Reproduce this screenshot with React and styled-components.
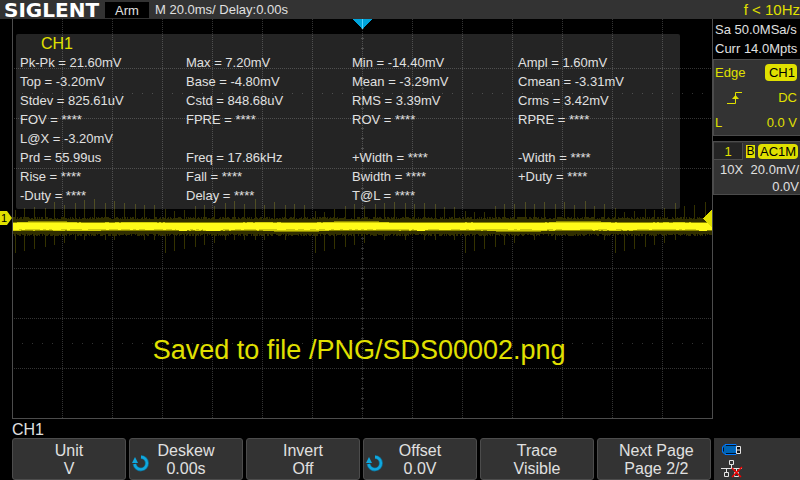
import React from "react";
import styled, { createGlobalStyle, css } from "styled-components";

const YELLOW = "#e0e000";
const BAR = "#333333";
const EDGE = "#4c4c4c";

const GlobalStyle = createGlobalStyle`
  * { box-sizing: border-box; }
  body {
    margin: 0;
    background: #000;
    color: #e0e0e0;
    font: 13px/19px "Liberation Sans", Arial, sans-serif;
  }
`;

const Screen = styled.div`
  display: flex;
  flex-direction: column;
  min-height: 100vh;
`;

const TopBar = styled.header`
  display: flex;
  align-items: center;
  height: 19px;
  padding-left: 4px;
  background: ${BAR};
  white-space: nowrap;
`;

const Logo = styled.span`
  align-self: flex-start;
  width: 101px;
  color: #fff;
  font-family: "DejaVu Sans", Verdana, sans-serif;
  font-size: 20px;
  font-weight: 700;
  line-height: 21px;
`;

const RunState = styled.span`
  width: 44px;
  height: 16px;
  margin-right: 6px;
  background: #000;
  line-height: 17px;
  text-align: center;
`;

const Frequency = styled.span`
  margin-left: auto;
  color: ${YELLOW};
  font-size: 15px;
`;

const Main = styled.main`
  display: grid;
  grid-template-columns: 12px minmax(0, 1fr) 87px;
  flex: 1;
`;

const Gutter = styled.div`
  position: relative;
`;

const ChannelMarker = styled.svg`
  position: absolute;
  left: 0;
  top: 48%;
  width: 12px;
  height: 14px;
`;

const Plot = styled.section`
  position: relative;
  border: 1px solid ${EDGE};
  border-top: 0;
`;

const PlotCanvas = styled.svg`
  position: absolute;
  inset: 0;
  width: 100%;
  height: 100%;
`;

const Measurements = styled.div`
  position: relative;
  width: 95%;
  margin: 15px 0 0 3px;
  padding-bottom: 4px;
  border-radius: 2px;
  background: rgba(255, 255, 255, 0.14);
`;

const MeasureTitle = styled.h2`
  margin: 0;
  padding-left: 25px;
  color: ${YELLOW};
  font-size: 16px;
  font-weight: 400;
  line-height: 19px;
`;

const MeasureGrid = styled.div`
  display: grid;
  grid-template-columns: repeat(4, 1fr);
  grid-auto-rows: 19px;
  white-space: nowrap;
`;

const Measure = styled.span`
  padding-left: 4px;
`;

const Toast = styled.div`
  position: absolute;
  left: 20%;
  top: 79%;
  color: ${YELLOW};
  font-size: 27px;
  line-height: 32px;
  white-space: nowrap;
`;

const Side = styled.aside`
  display: flex;
  flex-direction: column;
  white-space: nowrap;
`;

const Acquisition = styled.div`
  padding: 1px 0 1px 2px;
`;

const SidePanel = styled.section`
  border: 1px solid ${EDGE};
  border-right: 0;
  background: ${BAR};
  ${(p) => p.$trigger && css`
    display: grid;
    grid-auto-rows: 25px;
    margin-bottom: 5px;
    color: ${YELLOW};
  `}
`;

const SideRow = styled.div`
  display: flex;
  align-items: center;
  justify-content: space-between;
  padding: 0 3px 0 1px;
`;

const Badge = styled.span`
  padding: 0 2px 0 4px;
  border-radius: 4px;
  background: ${YELLOW};
  color: #000;
  line-height: 17px;
`;

const ChannelHead = styled.div`
  display: flex;
  align-items: center;
  height: 18px;
  color: ${YELLOW};
`;

const ChannelTab = styled.span`
  width: 29px;
  height: 17px;
  margin-right: 3px;
  border: 1px solid ${EDGE};
  border-width: 0 1px 1px 0;
  background: #242424;
  line-height: 18px;
  text-align: center;
`;

const Bandwidth = styled.span`
  display: flex;
  align-items: center;
  justify-content: center;
  width: 9px;
  height: 13px;
  margin-right: 3px;
  background: ${YELLOW};
  color: #000;
  font-size: 12px;
  line-height: 13px;
`;

const Coupling = styled(Badge)`
  padding: 0 2px;
  line-height: 15px;
`;

const ChannelRow = styled.div`
  display: flex;
  justify-content: space-between;
  height: 17px;
  padding: 0 1px 0 6px;
`;

const Bottom = styled.footer`
  display: grid;
  grid-template-columns: minmax(0, 1fr) 86px;
  gap: 0 3px;
  padding-left: 12px;
`;

const MenuTitle = styled.div`
  grid-column: 1 / -1;
  height: 19px;
  font-size: 16px;
  line-height: 22px;
`;

const SoftKeys = styled.nav`
  display: grid;
  grid-template-columns: repeat(6, minmax(0, 1fr));
  gap: 3px;
`;

const SoftKey = styled.button`
  display: grid;
  grid-template-columns: 16px 1fr 16px;
  grid-template-rows: 18px 18px;
  height: 42px;
  padding: 3px 5px;
  border: 1px solid ${EDGE};
  border-radius: 3px;
  background: ${BAR};
  color: #e0e0e0;
  font: 16px/18px "Liberation Sans", Arial, sans-serif;
  white-space: nowrap;
`;

const KeyText = styled.span`
  grid-column: 2;
  grid-row: ${(p) => p.$row};
`;

const KnobIcon = styled.svg`
  grid-column: 1;
  grid-row: 1 / 3;
  align-self: end;
  width: 18px;
  height: 18px;
  margin: 0 0 6px -4px;
`;

const Status = styled.div`
  display: flex;
  flex-direction: column;
  gap: 4px;
  padding: 5px 7px 2px;
  background: ${BAR};
`;

const noise = (n) => {
  const v = Math.sin(n * 127.1 + 11.7) * 43758.5453;
  return v - Math.floor(v);
};

const columns = (step, fn) => {
  let d = "";
  for (let x = 0; x < 700; x += step) {
    const [top, bottom] = fn(x);
    d += `M${x} ${top}h${step}V${bottom}h-${step}z`;
  }
  return d;
};

const drift = (x) => Math.sin(x / 17) + Math.sin(x / 41);
const hazePath = columns(1, (x) => [
  200 - Math.floor(noise(x) * 3),
  215 + Math.floor(noise(x + 900) * 3),
]);
const midPath = columns(3, (x) => [
  drift(x) > 1 ? 202 : 203,
  drift(x + 60) > 1 ? 213 : 212,
]);
const warmPath = columns(2, (x) => [
  drift(x) + noise(x) > 0.8 ? 203 : 204,
  drift(x + 60) + noise(x + 9) > 0.8 ? 212 : 211,
]);
const glowPath = columns(3, (x) => [
  204,
  210 + (noise(x + 50) > 0.6 ? 1 : 0),
]);
const dips = [[170, 14], [200, 20], [408, 14], [690, 14]];
const dipPath = dips
  .map(([x, w]) => `M${x - w / 2} 209h${w}v2h-3v1h-${w - 6}v-1h-3z`)
  .join("");

let spikePath = "";
for (let i = 0; i < 70; i += 1) {
  const x = 1 + i * 10 + (i % 3 === 0 ? 1 : 0);
  const wave = Math.abs(Math.sin((i * Math.PI) / 15.5));
  const up = 195 - Math.round(wave * 9 + noise(i) * 6);
  spikePath += `M${x} ${up}h1V200h-1z`;
  if (i % 15 < 6) spikePath += `M${x} 214h1v${20 - (i % 15) * 2}h-1z`;
  else if (noise(i + 70) > 0.4) spikePath += `M${x} 214h1v7h-1z`;
}

const range = (n) => Array.from({ length: n }, (_, i) => i);

const Graticule = () => (
  <PlotCanvas viewBox="0 0 699 399" preserveAspectRatio="none" shapeRendering="crispEdges" aria-hidden="true">
    <g stroke="#343434" strokeWidth="1" fill="none">
      {range(13).map((i) => (
        <path key={i} d={`M${49.5 + i * 50} 0V399`} strokeDasharray="1 1" />
      ))}
      {[49.5, 99.5, 149.5, 249.5, 299.5, 349.5].map((y) => (
        <path key={y} d={`M1 ${y}H699`} strokeDasharray="1 1" />
      ))}
      <path d="M9 74.5H699M9 324.5H699" strokeDasharray="1 9" />
      {range(39).map((i) => (
        <path key={i} d={`M348 ${9.5 + i * 10}h3`} />
      ))}
    </g>
    <path d={spikePath} fill="#343200" />
    <path d={hazePath} fill="#302e00" />
    <path d={midPath} fill="#8a8600" />
    <path d={warmPath} fill="#d0cc0c" />
    <path d={glowPath} fill="#fffb18" />
    <path d={dipPath} fill="#fffb18" />
    <path d="M340 0h19l-9.5 10z" fill="#00a5dc" />
    <path d="M349 0h1v10h-1z" fill="#52d3ff" />
    <path d="M699 190v19l-9 -10z" fill={YELLOW} />
  </PlotCanvas>
);

const Knob = () => (
  <KnobIcon viewBox="0 0 18 18" aria-hidden="true">
    <path d="M10 3A6.2 6.2 0 1 1 3.6 10" fill="none" stroke="#0f6f94" strokeWidth="4" />
    <path d="M10 3A6.2 6.2 0 1 1 3.6 10" fill="none" stroke="#10a8df" strokeWidth="2.4" />
    <path d="M4 3L7 9H1z" fill="#10a8df" />
  </KnobIcon>
);

const cells = [
  "Pk-Pk = 21.60mV", "Max = 7.20mV", "Min = -14.40mV", "Ampl = 1.60mV",
  "Top = -3.20mV", "Base = -4.80mV", "Mean = -3.29mV", "Cmean = -3.31mV",
  "Stdev = 825.61uV", "Cstd = 848.68uV", "RMS = 3.39mV", "Crms = 3.42mV",
  "FOV = ****", "FPRE = ****", "ROV = ****", "RPRE = ****",
  "L@X = -3.20mV", "", "", "",
  "Prd = 55.99us", "Freq = 17.86kHz", "+Width = ****", "-Width = ****",
  "Rise = ****", "Fall = ****", "Bwidth = ****", "+Duty = ****",
  "-Duty = ****", "Delay = ****", "T@L = ****", "",
];

const keys = [
  { name: "Unit", value: "V" },
  { name: "Deskew", value: "0.00s", knob: true },
  { name: "Invert", value: "Off" },
  { name: "Offset", value: "0.0V", knob: true },
  { name: "Trace", value: "Visible" },
  { name: "Next Page", value: "Page 2/2" },
];

export default function App() {
  return (
    <Screen>
      <GlobalStyle />
      <TopBar>
        <Logo>SIGLENT</Logo>
        <RunState>Arm</RunState>
        <span>M 20.0ms/ Delay:0.00s</span>
        <Frequency>f &lt; 10Hz</Frequency>
      </TopBar>

      <Main>
        <Gutter>
          <ChannelMarker viewBox="0 0 12 14" aria-label="Channel 1 position">
            <path d="M0 0H7L12 7L7 14H0z" fill={YELLOW} />
            <text x="1" y="11" fontSize="11" fill="#000">1</text>
          </ChannelMarker>
        </Gutter>

        <Plot aria-label="Waveform">
          <Graticule />
          <Measurements>
            <MeasureTitle>CH1</MeasureTitle>
            <MeasureGrid>
              {cells.map((text, i) => <Measure key={i}>{text}</Measure>)}
            </MeasureGrid>
          </Measurements>
          <Toast role="status">Saved to file /PNG/SDS00002.png</Toast>
        </Plot>

        <Side>
          <Acquisition>
            <div>Sa 50.0MSa/s</div>
            <div>Curr 14.0Mpts</div>
          </Acquisition>
          <SidePanel $trigger aria-label="Trigger">
            <SideRow><span>Edge</span><Badge>CH1</Badge></SideRow>
            <SideRow>
              <svg width="30" height="14" viewBox="0 0 30 14" aria-label="Rising edge">
                <path d="M12 12.5H20.5V1.5H27" fill="none" stroke={YELLOW} />
                <path d="M20.5 4L24 8H17z" fill={YELLOW} />
              </svg>
              <span>DC</span>
            </SideRow>
            <SideRow><span>L</span><span>0.0 V</span></SideRow>
          </SidePanel>
          <SidePanel aria-label="Channel 1">
            <ChannelHead>
              <ChannelTab>1</ChannelTab>
              <Bandwidth>B</Bandwidth>
              <Coupling>AC1M</Coupling>
            </ChannelHead>
            <ChannelRow><span>10X</span><span>20.0mV/</span></ChannelRow>
            <ChannelRow><span /><span>0.0V</span></ChannelRow>
          </SidePanel>
        </Side>
      </Main>

      <Bottom>
        <MenuTitle>CH1</MenuTitle>
        <SoftKeys aria-label="Channel menu">
          {keys.map((k) => (
            <SoftKey key={k.name} type="button">
              <KeyText $row={1}>{k.name}</KeyText>
              {k.knob && <Knob />}
              <KeyText $row={2}>{k.value}</KeyText>
            </SoftKey>
          ))}
        </SoftKeys>
        <Status>
          <svg width="22" height="13" viewBox="0 0 22 13" role="img" aria-label="USB drive">
            <path d="M4 1.5H15V11.5H4L1.5 9V4z" fill="#0064b4" stroke="#0078ff" />
            <path d="M5 2.5H15M5 10.5H15M2.5 4.5V8.5" stroke="#001428" />
            <path d="M15.5 3.5H19.5V10.5H15.5zM16 7H19" fill="#111" stroke="#e4e4e4" />
          </svg>
          <svg width="22" height="18" viewBox="0 0 22 18" role="img" aria-label="Network disconnected">
            <path d="M8.5 .5H12.5V4.5H8.5zM10.5 5V9M0 8.5H21M5.5 9V12M15.5 9V12M3.5 12.5H7.5V16.5H3.5zM13.5 12.5H17.5V16.5H13.5z" fill="none" stroke="#e4e4e4" />
            <path d="M11 8L20 17M21 7L11 17" stroke="#f00000" strokeWidth="1.5" />
          </svg>
        </Status>
      </Bottom>
    </Screen>
  );
}
